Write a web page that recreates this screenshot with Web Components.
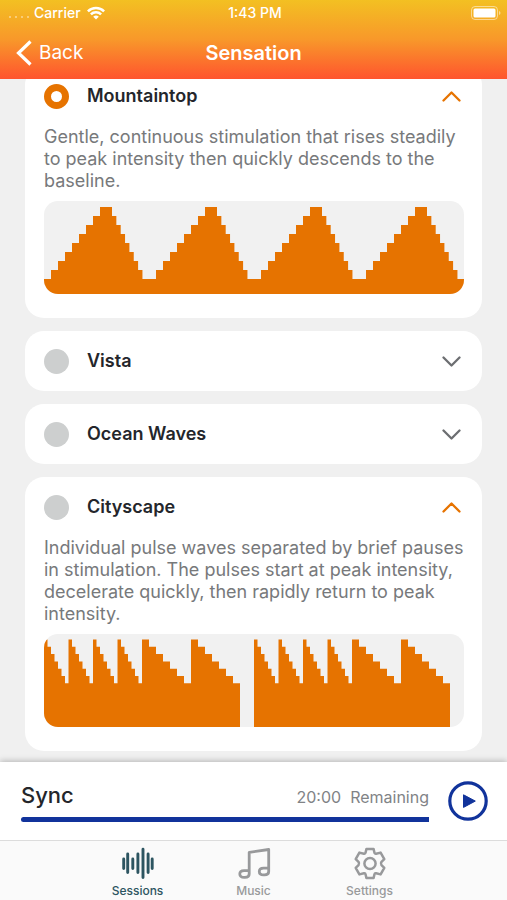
<!DOCTYPE html>
<html lang="en">
<head>
<meta charset="utf-8">
<meta name="viewport" content="width=device-width, initial-scale=1">
<title>Sensation</title>
<style>
  :root {
    --orange: #e67300;
    --blue: #11339b;
    --ink: #24262b;
    --muted: #77797b;
    --surface: #f0f0f0;
  }
  body {
    margin: 0;
    font-family: Inter, Roboto, "Liberation Sans", sans-serif;
    color: var(--ink);
  }
</style>
</head>
<body>
<sensation-app></sensation-app>

<script>
const define = (name, html, setup) => {
  const template = document.createElement('template');
  template.innerHTML = html;
  customElements.define(name, class extends HTMLElement {
    connectedCallback() {
      if (this.shadowRoot) return;
      this.attachShadow({ mode: 'open' }).append(template.content.cloneNode(true));
      if (setup) setup(this, this.shadowRoot);
    }
  });
};

define('status-bar', `
  <style>
    :host { display: grid; grid-template-columns: 1fr auto 1fr; align-items: center; height: 26px;
      padding: 0 6px 0 9px; font-size: 14px; font-weight: 500; line-height: 16px; }
    .left { display: flex; align-items: center; gap: 6px; }
    .dots { display: flex; gap: 4px; padding-top: 7px; margin-right: -1px; }
    .dots i { width: 2px; height: 2px; border-radius: 50%; background: #fff; opacity: .5; }
    .battery { justify-self: end; }
    svg { display: block; }
  </style>
  <div class="left">
    <span class="dots"><i></i><i></i><i></i><i></i></span>
    <span>Carrier</span>
    <svg width="18" height="14" viewBox="0 0 18 14" fill="none" stroke="#fff" stroke-width="2.5" aria-hidden="true">
      <path d="M.9 5.3a11.5 11.5 0 0 1 16.2 0"/><path d="M3.9 8.4a7.2 7.2 0 0 1 10.2 0"/>
      <path d="M9 13.6 6.2 10.800a4 4 0 0 1 5.600 0Z" fill="#fff" stroke="none"/>
    </svg>
  </div>
  <span>1:43 PM</span>
  <svg class="battery" width="30" height="14" viewBox="0 0 30 14" aria-hidden="true">
    <rect x=".5" y=".5" width="26" height="13" rx="3.500" fill="none" stroke="#fff" stroke-opacity=".5"/>
    <rect x="2.500" y="2.500" width="22" height="9" rx="1.500" fill="#fff"/>
    <path d="M28 5v4q1.500-.6 1.500-2T28 5Z" fill="#fff" fill-opacity=".5"/>
  </svg>
`);

define('nav-header', `
  <style>
    :host { display: block; flex: none; color: #fff;
      background: linear-gradient(#f3c022, #f8982a 50%, #ff542e); }
    nav { display: grid; grid-template-columns: 1fr auto 1fr; align-items: center; height: 53px; padding: 0 16px; }
    button { display: flex; align-items: center; gap: 7px; justify-self: start; padding: 0; border: 0;
      background: none; color: inherit; font-family: inherit; font-size: 19px; line-height: 24px; cursor: pointer; }
    h1 { margin: 0; font-size: 20px; line-height: 24px; font-weight: 600; }
  </style>
  <status-bar></status-bar>
  <nav>
    <button type="button">
      <svg width="16" height="26" viewBox="0 0 16 26" fill="none" stroke="#fff" stroke-width="3.200" aria-hidden="true"><path d="M14.500 1.500 2.500 13l12 11.500"/></svg>
      <span>Back</span>
    </button>
    <h1><slot></slot></h1>
  </nav>
`);

/* Stepped intensity graph, drawn in a 420 x 93 box and stretched to its width. */
const waves = {
  mountaintop() {
    let d = 'M0 93V78';
    for (let p = 0; p < 4; p++) {
      const x = p * 105;
      for (let i = 1; i <= 8; i++) d += `H${x + i * 7}V${78 - i * 9}`;
      for (let i = 0; i < 8; i++) d += `H${x + 68 + i * 4.35}V${15 + i * 9}`;
    }
    return d + 'H420V93Z';
  },
  cityscape() {
    let d = '';
    for (const start of [0, 210]) {
      d += `M${start} 93`;
      let x = start;
      for (const step of [3.5, 3.5, 3.5, 3.5, 7, 7]) {
        d += 'V5.5';
        for (let i = 1; i <= 6; i++) d += `H${x + i * step}V${5.5 + i * 7.3}`;
        x += step * 7;
        d += `H${x}`;
      }
      d += 'V93Z';
    }
    return d;
  }
};

define('wave-chart', `
  <style>
    :host { display: block; height: 93px; border-radius: 14px; overflow: hidden; background: #f1f1f1; }
    svg { display: block; width: 100%; height: 100%; }
    path { fill: var(--orange); }
  </style>
  <svg viewBox="0 0 420 93" preserveAspectRatio="none" aria-hidden="true"><path/></svg>
`, (host, root) => root.querySelector('path').setAttribute('d', waves[host.getAttribute('wave')]()));

define('sensation-card', `
  <style>
    :host { display: block; flex: none; padding: 0 18px 0 19px; border-radius: 19px; background: #fff; }
    header { display: flex; align-items: center; height: 60px; }
    label { display: flex; align-items: center; gap: 18px; flex: 1; font-size: 18px; line-height: 22px; font-weight: 600; }
    input { appearance: none; width: 25px; height: 25px; margin: 0; border-radius: 50%; background: #cdcfcf; }
    input:checked { background: #fff; border: 7px solid var(--orange); }
    button { display: flex; padding: 6px 3px; border: 0; background: none; color: #6c6e71; cursor: pointer; }
    :host([open]) button { color: var(--orange); }
    :host([open]) svg { transform: rotate(180deg); }
    .body { display: none; }
    :host([open]) .body { display: flex; flex-direction: column; gap: 9px; padding-bottom: 24px; }
    p { margin: 0 -6px 0 0; font-size: 18px; line-height: 22px; color: var(--muted); }
  </style>
  <header>
    <label><input type="radio" name="sensation"><span><slot name="title"></slot></span></label>
    <button type="button" aria-label="Details">
      <svg width="19" height="11" viewBox="0 0 19 11" fill="none" stroke="currentColor" stroke-width="2.300" stroke-linecap="round" stroke-linejoin="round" aria-hidden="true"><path d="M1.500 1.500l8 8 8-8"/></svg>
    </button>
  </header>
  <div class="body">
    <p><slot></slot></p>
    <slot name="chart"></slot>
  </div>
`, (host, root) => {
  const input = root.querySelector('input');
  const button = root.querySelector('button');
  input.checked = host.hasAttribute('selected');
  input.addEventListener('change', () => {
    for (const card of host.parentNode.querySelectorAll('sensation-card'))
      if (card !== host) card.shadowRoot.querySelector('input').checked = false;
  });
  const sync = () => button.setAttribute('aria-expanded', host.hasAttribute('open'));
  button.addEventListener('click', () => { host.toggleAttribute('open'); sync(); });
  sync();
});

define('sync-player', `
  <style>
    :host { display: flex; flex: none; align-items: center; gap: 19px; height: 78px; padding: 0 19px 0 21px;
      box-sizing: border-box; background: #fff; box-shadow: 0 -1px 6px rgba(0, 0, 0, .25); z-index: 1; }
    .main { flex: 1; display: grid; gap: 8px; }
    .row { display: flex; align-items: baseline; justify-content: space-between; }
    h2 { margin: 0; font-size: 22px; line-height: 28px; font-weight: 500; }
    .time { display: flex; gap: 9px; font-size: 16px; line-height: 20px; color: #818386; }
    .bar { height: 5px; border-radius: 3px 0 0 3px; background: var(--blue); }
    button { display: flex; padding: 0; border: 0; background: none; cursor: pointer; }
  </style>
  <div class="main">
    <div class="row"><h2>Sync</h2><div class="time"><span>20:00</span><span>Remaining</span></div></div>
    <div class="bar" role="progressbar" aria-label="Time remaining" aria-valuenow="100"></div>
  </div>
  <button type="button" aria-label="Play">
    <svg width="40" height="40" viewBox="0 0 40 40" aria-hidden="true">
      <circle cx="20" cy="20" r="18.200" fill="#fff" stroke="#11339b" stroke-width="3.200"/>
      <path d="M15.500 13.800v12.600L27.300 20.100Z" fill="#11339b" stroke="#11339b" stroke-width="1" stroke-linejoin="round"/>
    </svg>
  </button>
`);

define('tab-item', `
  <style>
    :host { display: block; }
    a { display: flex; flex-direction: column; align-items: center; gap: 3px; color: #98999b;
      font-size: 12px; line-height: 16px; font-weight: 500; text-decoration: none; }
    :host([current]) a { color: #2d5561; }
  </style>
  <a href="#"><slot name="icon"></slot><span><slot></slot></span></a>
`, (host, root) => { if (host.hasAttribute('current')) root.querySelector('a').setAttribute('aria-current', 'page'); });

define('tab-bar', `
  <style>
    :host { display: grid; flex: none; grid-template-columns: repeat(3, 116px); justify-content: center;
      height: 60px; box-sizing: border-box; padding-top: 5px; border-top: 1px solid #dcdcdc; background: #fafafa; z-index: 2; }
    svg { display: block; fill: none; stroke: currentColor; }
  </style>
  <tab-item current>
    <svg slot="icon" width="34" height="34" viewBox="0 0 34 34" stroke-width="2.900" stroke-linecap="round">
      <path d="M2.700 13v9.500M6.700 8v18.500M11.800 13v9.500M16.900 8v18.500M22 3.200v28.400M27.100 8v18.500M31.200 13v9.500"/>
    </svg>
    Sessions
  </tab-item>
  <tab-item>
    <svg slot="icon" width="34" height="34" viewBox="0 0 34 34" stroke-width="2.800" stroke-linejoin="round">
      <path d="M12.200 28V6.300L31.700 3.500V25.500M12.200 28c0 2.200-1.300 3.300-4.200 3.300H7c-2.700 0-4.200-1.300-4.200-3.400s1.500-3.300 4.200-3.300h5.200M31.700 25.500c0 2.200-1.300 3.300-4.200 3.300h-1c-2.700 0-4.200-1.300-4.200-3.400s1.500-3.300 4.200-3.300h5.200"/>
    </svg>
    Music
  </tab-item>
  <tab-item>
    <svg slot="icon" width="34" height="34" viewBox="0 0 34 34" stroke-width="2.500" stroke-linejoin="round">
      <path d="M13.400 3h7.200l.8 3.600q.3 1.400 1.700 1.100l4.500-1.100 3.700 6.500-2.800 2.700q-1.200 1.700 0 3.400l2.800 2.700-3.700 6.500-4.500-1.100q-1.400-.3-1.700 1.100L20.600 32h-7.200l-.8-3.600q-.3-1.400-1.700-1.100l-4.500 1.100-3.700-6.500 2.800-2.700q1.200-1.700 0-3.400L2.700 13.100l3.700-6.500 4.500 1.100q1.400.3 1.700-1.100Z"/>
      <circle cx="17" cy="17.500" r="5.600"/>
    </svg>
    Settings
  </tab-item>
`);

define('sensation-app', `
  <style>
    :host { display: flex; flex-direction: column; height: 100vh; background: var(--surface); }
    main { flex: 1; min-height: 0; overflow-y: auto; scrollbar-width: none; display: flex; flex-direction: column;
      gap: 13px; padding: 0 25px 11px; }
  </style>
  <nav-header>Sensation</nav-header>
  <main>
    <sensation-card open selected>
      <span slot="title">Mountaintop</span>
      Gentle, continuous stimulation that rises steadily to peak intensity then quickly descends to the baseline.
      <wave-chart slot="chart" wave="mountaintop"></wave-chart>
    </sensation-card>
    <sensation-card><span slot="title">Vista</span></sensation-card>
    <sensation-card><span slot="title">Ocean Waves</span></sensation-card>
    <sensation-card open>
      <span slot="title">Cityscape</span>
      Individual pulse waves separated by brief pauses in stimulation. The pulses start at peak intensity, decelerate quickly, then rapidly return to peak intensity.
      <wave-chart slot="chart" wave="cityscape"></wave-chart>
    </sensation-card>
  </main>
  <sync-player></sync-player>
  <tab-bar></tab-bar>
`, (host, root) => {
  const main = root.querySelector('main');
  main.scrollTop = main.scrollHeight;
});
</script>
</body>
</html>
